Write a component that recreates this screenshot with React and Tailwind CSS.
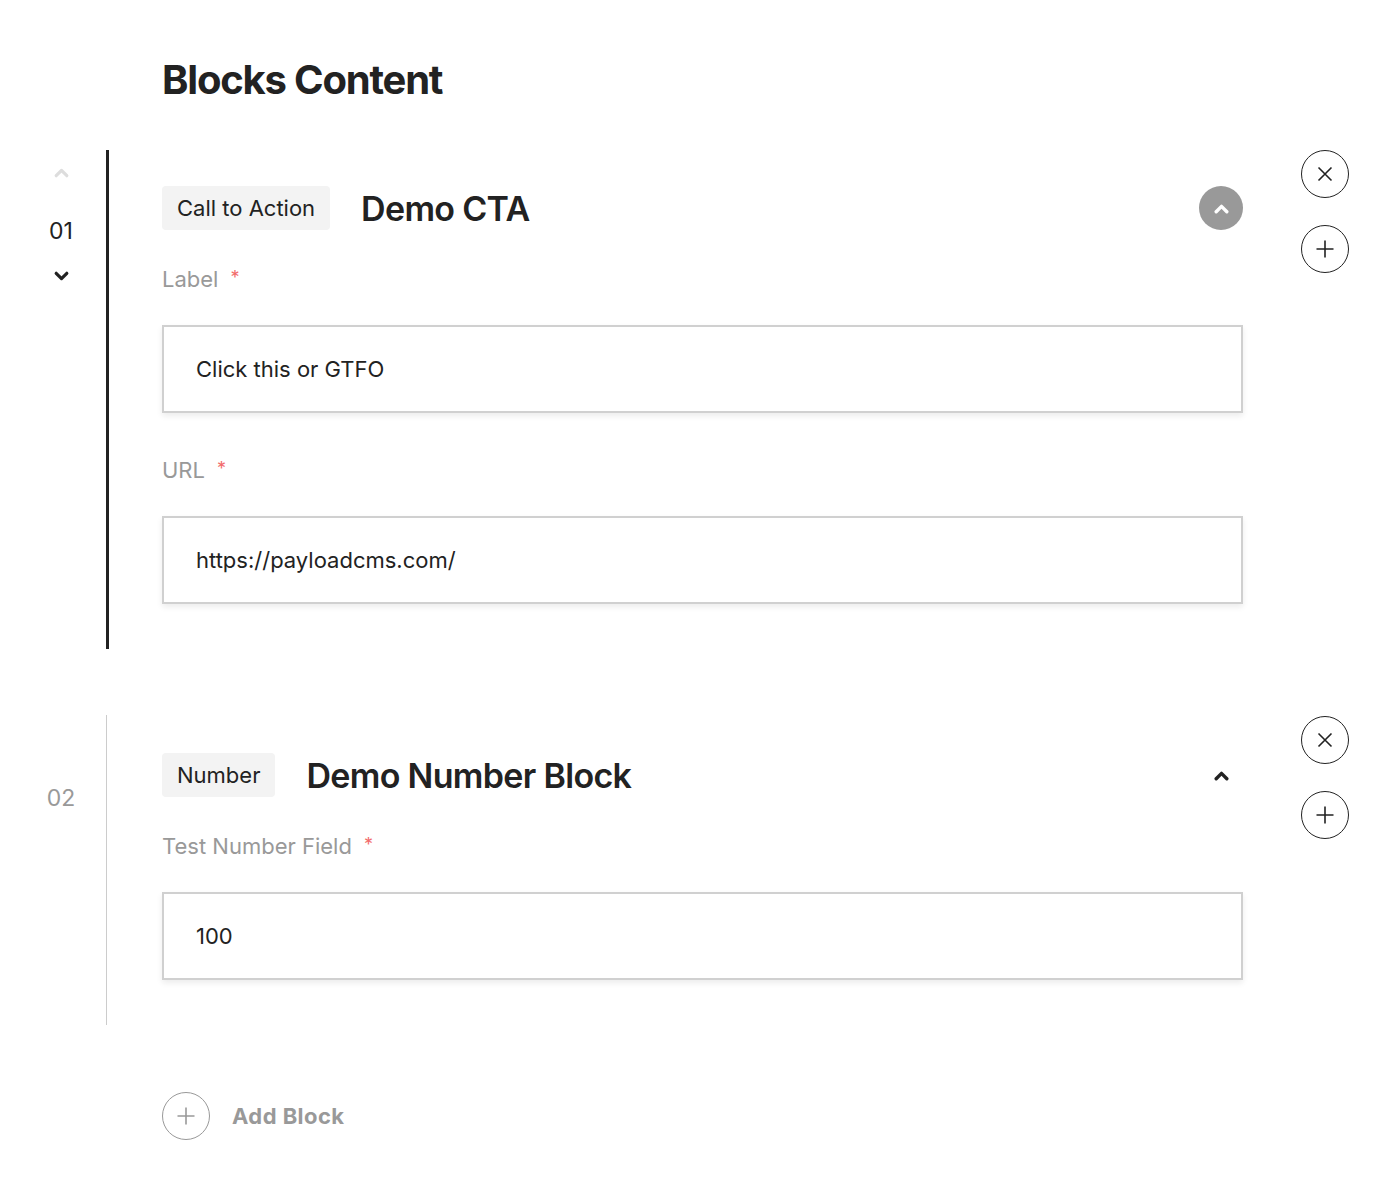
import { useState } from "react";

const font = { fontFamily: "Inter, 'Liberation Sans', sans-serif" };

function ChevronUp({ className = "", stroke = 3 }) {
  return (
    <svg viewBox="0 0 16 10" className={className} fill="none" stroke="currentColor" strokeWidth={stroke} strokeLinecap="round" strokeLinejoin="round">
      <path d="M3 8 L8 3 L13 8" />
    </svg>
  );
}

function ChevronDown({ className = "", stroke = 3 }) {
  return (
    <svg viewBox="0 0 16 10" className={className} fill="none" stroke="currentColor" strokeWidth={stroke} strokeLinecap="round" strokeLinejoin="round">
      <path d="M3 2 L8 7 L13 2" />
    </svg>
  );
}

function CircleBtn({ kind, muted }) {
  const color = muted ? "border-[#999] text-[#999]" : "border-[#222] text-[#222]";
  return (
    <button className={`w-12 h-12 rounded-full border-[1.5px] ${color} flex items-center justify-center bg-white`}>
      {kind === "x" ? (
        <svg viewBox="0 0 20 20" className="w-5 h-5" fill="none" stroke="currentColor" strokeWidth="1.6">
          <path d="M3.5 3.5 L16.5 16.5 M16.5 3.5 L3.5 16.5" />
        </svg>
      ) : (
        <svg viewBox="0 0 20 20" className="w-5 h-5" fill="none" stroke="currentColor" strokeWidth="1.6">
          <path d="M10 1.5 V18.5 M1.5 10 H18.5" />
        </svg>
      )}
    </button>
  );
}

function Field({ label, value }) {
  return (
    <div className="mt-[44px] first:mt-0">
      <div className="h-[26px] flex items-center text-[22px] text-[#999] leading-none">
        {label}
        <span className="ml-[12px] text-[#f26b6b] text-[18px] -mt-[2px]">*</span>
      </div>
      <input
        readOnly
        value={value}
        className="mt-[33px] w-full h-[88px] border-2 border-[#d0d0d0] bg-white px-[32px] text-[22px] text-[#222] outline-none shadow-[0_3px_6px_rgba(0,0,0,0.08)]"
        style={font}
      />
    </div>
  );
}

function Block({ index, active, type, title, fields, open, setOpen, topPad }) {
  return (
    <div className="flex">
      <div className="w-[106px] pl-[16px]">
        <div className="w-[90px] flex flex-col items-center" style={{ paddingTop: topPad - 36 }}>
          <div className={`h-[44px] flex items-center ${active ? "text-[#ddd]" : "invisible"}`}>
            <ChevronUp className="w-[17px] h-[11px]" />
          </div>
          <div className={`h-[30px] mt-[22px] flex items-center text-[23px] ${active ? "text-[#222]" : "text-[#999]"}`}>{index}</div>
          <div className={`h-[30px] mt-[15px] flex items-center ${active ? "text-[#222]" : "invisible"}`}>
            <ChevronDown className="w-[17px] h-[11px]" />
          </div>
        </div>
      </div>
      <div className={`flex-1 flex ${active ? "border-l-[3px] border-[#222]" : "border-l border-[#ccc] pl-[2px]"}`}>
        <div className="w-[1134px] pl-[53px]" style={{ paddingTop: topPad, paddingBottom: 45 }}>
          <div className="w-[1081px]">
            <div className="flex items-center h-[44px]">
              <span className="h-[44px] px-[15px] rounded bg-[#f3f3f3] flex items-center text-[22px] text-[#222]">{type}</span>
              <h2 className="ml-[31px] text-[34px] font-semibold tracking-[-0.02em] text-[#222]">{title}</h2>
              <button
                onClick={() => setOpen(!open)}
                className={`ml-auto w-[44px] h-[44px] rounded-full flex items-center justify-center ${active ? "bg-[#999] text-white" : "text-[#222]"}`}
              >
                <ChevronUp className="w-[17px] h-[11px]" stroke={3.2} />
              </button>
            </div>
            <div className="mt-[36px]">
              {fields.map((f) => (
                <Field key={f.label} {...f} />
              ))}
            </div>
          </div>
        </div>
        <div className="pl-[58px] flex flex-col gap-[27px]" style={{ paddingTop: active ? 0 : 1 }}>
          <CircleBtn kind="x" />
          <CircleBtn kind="plus" />
        </div>
      </div>
    </div>
  );
}

export default function App() {
  const [open1, setOpen1] = useState(true);
  const [open2, setOpen2] = useState(true);
  return (
    <div className="min-h-screen bg-white pt-[56px] pb-[60px]" style={font}>
      <h1 className="ml-[162px] text-[40px] leading-[48px] font-bold tracking-[-0.03em] text-[#222]">Blocks Content</h1>
      <div className="mt-[46px]">
        <Block
          index="01"
          active
          type="Call to Action"
          title="Demo CTA"
          open={open1}
          setOpen={setOpen1}
          topPad={36}
          fields={[
            { label: "Label", value: "Click this or GTFO" },
            { label: "URL", value: "https://payloadcms.com/" },
          ]}
        />
      </div>
      <div className="mt-[66px]">
        <Block
          index="02"
          type="Number"
          title="Demo Number Block"
          open={open2}
          setOpen={setOpen2}
          topPad={38}
          fields={[{ label: "Test Number Field", value: "100" }]}
        />
      </div>
      <div className="mt-[67px] ml-[162px] flex items-center">
        <CircleBtn kind="plus" muted />
        <span className="ml-[22px] text-[22px] font-bold tracking-[0.02em] text-[#999]">Add Block</span>
      </div>
    </div>
  );
}
